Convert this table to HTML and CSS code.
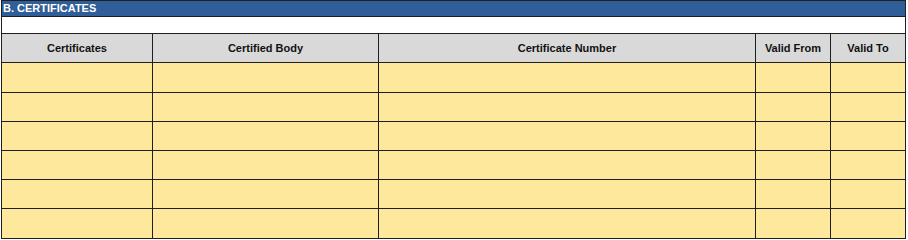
FILE: index.html
```html
<!DOCTYPE html>
<html>
<head>
<meta charset="utf-8">
<link rel="stylesheet" href="styles.css">
</head>
<body>
<div class="sheet">
  <div class="title">B. CERTIFICATES</div>
  <div class="blank"></div>
  <div class="hd">Certificates</div>
  <div class="hd">Certified Body</div>
  <div class="hd">Certificate Number</div>
  <div class="hd">Valid From</div>
  <div class="hd">Valid To</div>
  <div class="c"></div><div class="c"></div><div class="c"></div><div class="c"></div><div class="c"></div>
  <div class="c"></div><div class="c"></div><div class="c"></div><div class="c"></div><div class="c"></div>
  <div class="c"></div><div class="c"></div><div class="c"></div><div class="c"></div><div class="c"></div>
  <div class="c"></div><div class="c"></div><div class="c"></div><div class="c"></div><div class="c"></div>
  <div class="c"></div><div class="c"></div><div class="c"></div><div class="c"></div><div class="c"></div>
  <div class="c"></div><div class="c"></div><div class="c"></div><div class="c"></div><div class="c"></div>
</div>
</body>
</html>
```
FILE: styles.css
```css
html, body {
  margin: 0;
  padding: 0;
  background: #ffffff;
}
body {
  padding-left: 1px;
  font-family: "Liberation Sans", Arial, sans-serif;
}
.sheet {
  width: 905px;
  box-sizing: border-box;
  display: grid;
  grid-template-columns: 150px 225px 376px 74px 74px;
  grid-template-rows: 15px 16px 28px 29px 28px 28px 28px 28px 29px;
  gap: 1px;
  padding: 1px;
  background: #1f1f1f;
}
.title {
  grid-column: 1 / -1;
  background: #2f5e98;
  color: #ffffff;
  font-weight: bold;
  font-size: 11px;
  line-height: 15px;
  padding-left: 1px;
}
.blank {
  grid-column: 1 / -1;
  background: #ffffff;
}
.hd {
  background: #d9d9d9;
  color: #111111;
  font-weight: bold;
  font-size: 11px;
  display: flex;
  align-items: center;
  justify-content: center;
}
.c {
  background: #fee89b;
}
```
